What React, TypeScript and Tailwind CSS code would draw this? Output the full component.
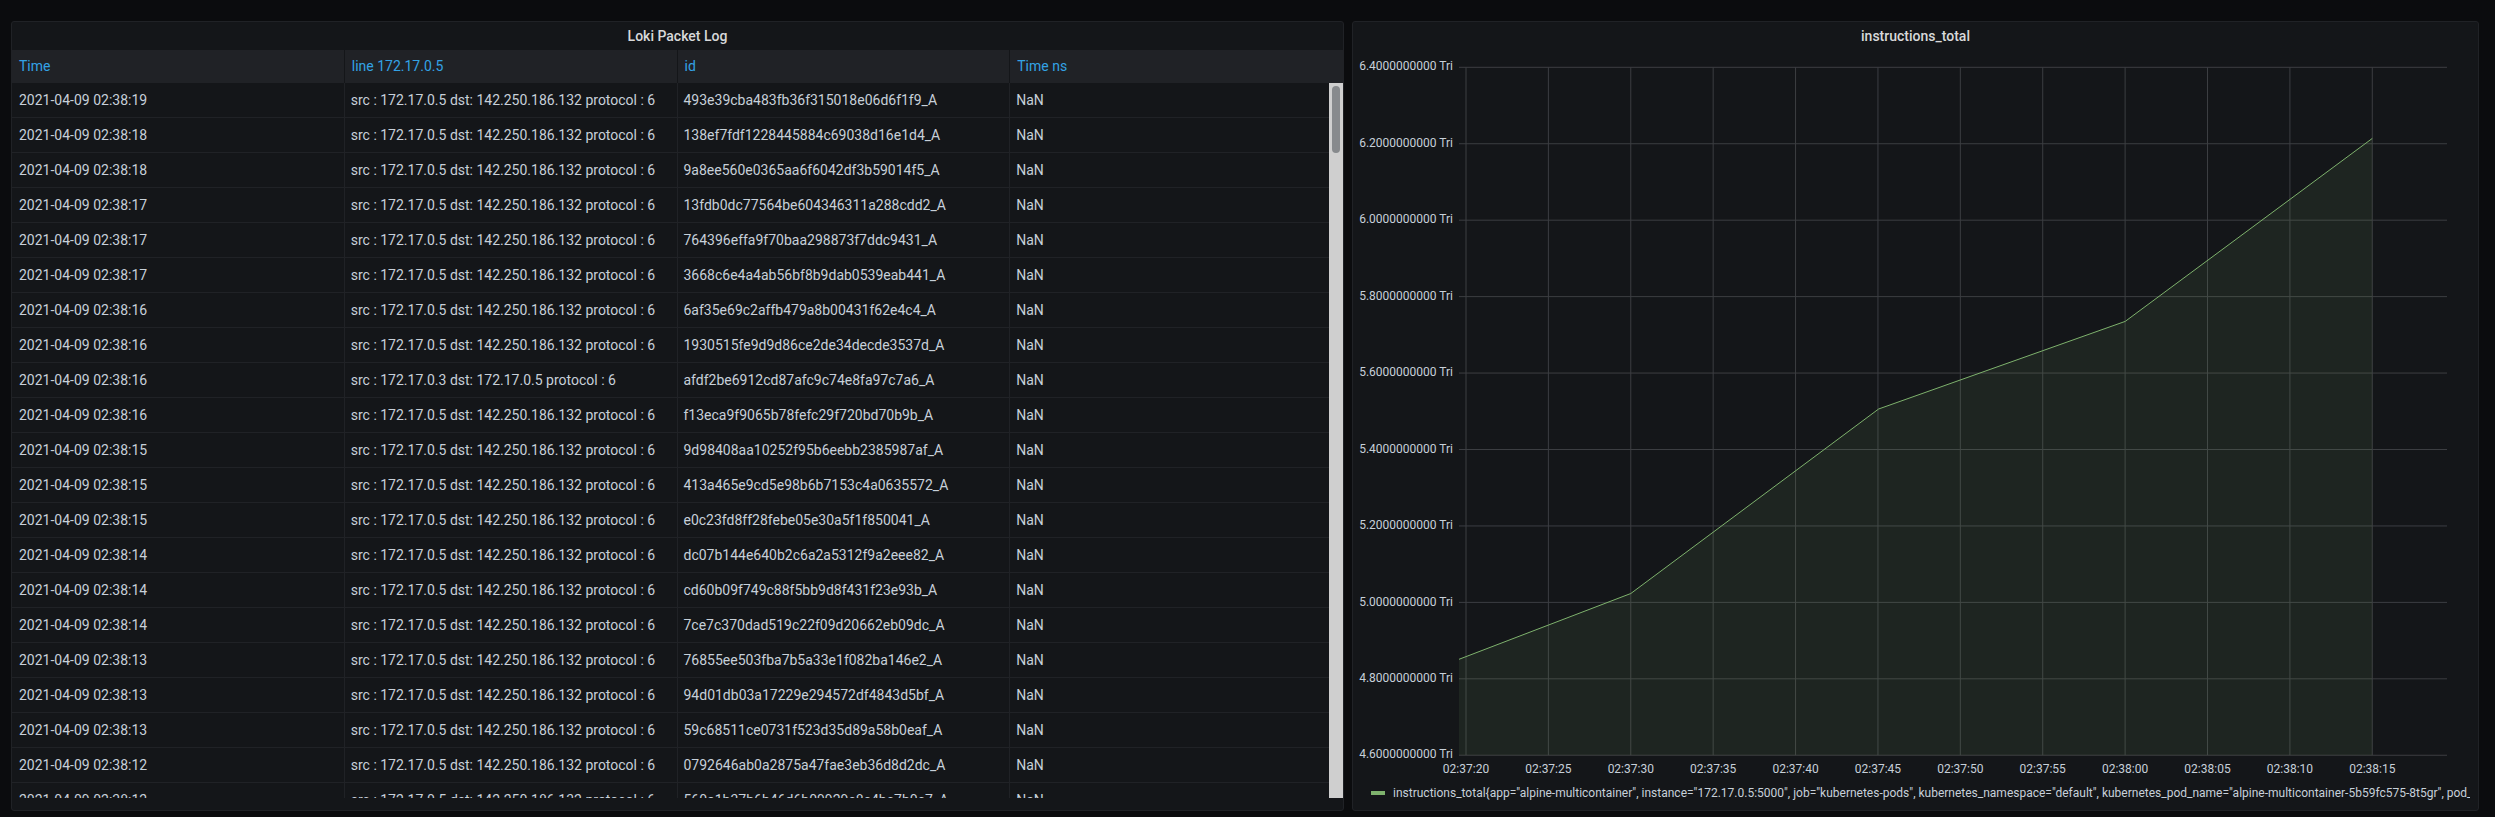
import React from "react";

const rows: [string, string, string][] = [
  ["2021-04-09 02:38:19", "src : 172.17.0.5 dst: 142.250.186.132 protocol : 6", "493e39cba483fb36f315018e06d6f1f9_A"],
  ["2021-04-09 02:38:18", "src : 172.17.0.5 dst: 142.250.186.132 protocol : 6", "138ef7fdf1228445884c69038d16e1d4_A"],
  ["2021-04-09 02:38:18", "src : 172.17.0.5 dst: 142.250.186.132 protocol : 6", "9a8ee560e0365aa6f6042df3b59014f5_A"],
  ["2021-04-09 02:38:17", "src : 172.17.0.5 dst: 142.250.186.132 protocol : 6", "13fdb0dc77564be604346311a288cdd2_A"],
  ["2021-04-09 02:38:17", "src : 172.17.0.5 dst: 142.250.186.132 protocol : 6", "764396effa9f70baa298873f7ddc9431_A"],
  ["2021-04-09 02:38:17", "src : 172.17.0.5 dst: 142.250.186.132 protocol : 6", "3668c6e4a4ab56bf8b9dab0539eab441_A"],
  ["2021-04-09 02:38:16", "src : 172.17.0.5 dst: 142.250.186.132 protocol : 6", "6af35e69c2affb479a8b00431f62e4c4_A"],
  ["2021-04-09 02:38:16", "src : 172.17.0.5 dst: 142.250.186.132 protocol : 6", "1930515fe9d9d86ce2de34decde3537d_A"],
  ["2021-04-09 02:38:16", "src : 172.17.0.3 dst: 172.17.0.5 protocol : 6", "afdf2be6912cd87afc9c74e8fa97c7a6_A"],
  ["2021-04-09 02:38:16", "src : 172.17.0.5 dst: 142.250.186.132 protocol : 6", "f13eca9f9065b78fefc29f720bd70b9b_A"],
  ["2021-04-09 02:38:15", "src : 172.17.0.5 dst: 142.250.186.132 protocol : 6", "9d98408aa10252f95b6eebb2385987af_A"],
  ["2021-04-09 02:38:15", "src : 172.17.0.5 dst: 142.250.186.132 protocol : 6", "413a465e9cd5e98b6b7153c4a0635572_A"],
  ["2021-04-09 02:38:15", "src : 172.17.0.5 dst: 142.250.186.132 protocol : 6", "e0c23fd8ff28febe05e30a5f1f850041_A"],
  ["2021-04-09 02:38:14", "src : 172.17.0.5 dst: 142.250.186.132 protocol : 6", "dc07b144e640b2c6a2a5312f9a2eee82_A"],
  ["2021-04-09 02:38:14", "src : 172.17.0.5 dst: 142.250.186.132 protocol : 6", "cd60b09f749c88f5bb9d8f431f23e93b_A"],
  ["2021-04-09 02:38:14", "src : 172.17.0.5 dst: 142.250.186.132 protocol : 6", "7ce7c370dad519c22f09d20662eb09dc_A"],
  ["2021-04-09 02:38:13", "src : 172.17.0.5 dst: 142.250.186.132 protocol : 6", "76855ee503fba7b5a33e1f082ba146e2_A"],
  ["2021-04-09 02:38:13", "src : 172.17.0.5 dst: 142.250.186.132 protocol : 6", "94d01db03a17229e294572df4843d5bf_A"],
  ["2021-04-09 02:38:13", "src : 172.17.0.5 dst: 142.250.186.132 protocol : 6", "59c68511ce0731f523d35d89a58b0eaf_A"],
  ["2021-04-09 02:38:12", "src : 172.17.0.5 dst: 142.250.186.132 protocol : 6", "0792646ab0a2875a47fae3eb36d8d2dc_A"],
  ["2021-04-09 02:38:12", "src : 172.17.0.5 dst: 142.250.186.132 protocol : 6", "560a1b37b6b46d6b09929c8c4bc7b0c7_A"],
];

const headers = ["Time", "line 172.17.0.5", "id", "Time ns"];

function LogTable() {
  return (
    <div className="flex flex-col w-[1333px] h-[790px] bg-[#141619] border border-[#202226] rounded-[3px] overflow-hidden">
      <div className="h-[28px] flex items-center justify-center text-[14px] font-medium text-[#d8d9da]">
        Loki Packet Log
      </div>
      <div className="grid grid-cols-4 h-[33px] bg-[#202226]">
        {headers.map((h, i) => (
          <div
            key={h}
            className={`flex items-center pl-[7px] text-[14px] text-[#33a2e5] ${i < 3 ? "border-r border-[#141619]" : ""}`}
          >
            {h}
          </div>
        ))}
      </div>
      <div className="relative h-[715px] overflow-hidden">
        {rows.map((r, idx) => (
          <div key={idx} className="grid grid-cols-4 h-[35px] border-b border-[#202226]">
            <div className="flex items-center pl-[7px] border-r border-[#202226] whitespace-nowrap">{r[0]}</div>
            <div className="flex items-center pl-[6px] border-r border-[#202226] whitespace-nowrap">{r[1]}</div>
            <div className="flex items-center pl-[6px] border-r border-[#202226] whitespace-nowrap">{r[2]}</div>
            <div className="flex items-center pl-[6px] whitespace-nowrap">NaN</div>
          </div>
        ))}
        <div className="absolute right-0 top-0 bottom-0 w-[14px] bg-[#cfcfcf]">
          <div className="absolute left-[3px] top-[3px] w-[8px] h-[67px] rounded-full bg-[#878a8d]" />
        </div>
      </div>
    </div>
  );
}

function Chart() {
  const yLabels = ["6.4000000000 Tri", "6.2000000000 Tri", "6.0000000000 Tri", "5.8000000000 Tri", "5.6000000000 Tri", "5.4000000000 Tri", "5.2000000000 Tri", "5.0000000000 Tri", "4.8000000000 Tri", "4.6000000000 Tri"];
  const xLabels = ["02:37:20", "02:37:25", "02:37:30", "02:37:35", "02:37:40", "02:37:45", "02:37:50", "02:37:55", "02:38:00", "02:38:05", "02:38:10", "02:38:15"];
  const top = 17.3;
  const yStep = 76.44;
  const bottom = top + yStep * 9;
  const left = 106;
  const right = 1094;
  const x0 = 113;
  const xStep = 82.39;
  const pts: [number, number][] = [
    [106, 609.3],
    [277.8, 543.5],
    [525.6, 359],
    [772.2, 271.4],
    [1019.3, 88.4],
  ];
  const line = pts.map((p) => p.join(",")).join(" ");
  const area = `${pts[0][0]},${bottom} ${line} ${pts[pts.length - 1][0]},${bottom}`;
  return (
    <svg width={1125} height={730} className="block" fontFamily="Roboto, sans-serif">
      {yLabels.map((_, i) => (
        <line key={"h" + i} x1={left} x2={right} y1={top + i * yStep} y2={top + i * yStep} stroke="#3c3e42" strokeWidth={1} />
      ))}
      {xLabels.map((_, k) => (
        <line key={"v" + k} x1={x0 + k * xStep} x2={x0 + k * xStep} y1={top} y2={bottom} stroke="#3c3e42" strokeWidth={1} />
      ))}
      <polygon points={area} fill="#7eb26d" fillOpacity={0.1} />
      <polyline points={line} fill="none" stroke="#7eb26d" strokeWidth={1} />
      {yLabels.map((t, i) => (
        <text key={"yl" + i} x={100} y={top + i * yStep} textAnchor="end" dominantBaseline="middle" fontSize={12} fill="#c7d0d9">
          {t}
        </text>
      ))}
      {xLabels.map((t, k) => (
        <text key={"xl" + k} x={x0 + k * xStep} y={720} textAnchor="middle" dominantBaseline="middle" fontSize={12} fill="#c7d0d9">
          {t}
        </text>
      ))}
    </svg>
  );
}

function GraphPanel() {
  return (
    <div className="flex flex-col w-[1127px] h-[790px] bg-[#141619] border border-[#202226] rounded-[3px] overflow-hidden">
      <div className="h-[28px] flex items-center justify-center text-[14px] font-medium text-[#d8d9da]">
        instructions_total
      </div>
      <Chart />
      <div className="h-[26px] flex items-center pl-[18px] pr-[8px] overflow-hidden">
        <div className="w-[14px] h-[4px] bg-[#7eb26d] shrink-0" />
        <div className="ml-[8px] text-[12px] text-[#c7d0d9] whitespace-nowrap overflow-hidden">
          instructions_total{"{"}app="alpine-multicontainer", instance="172.17.0.5:5000", job="kubernetes-pods", kubernetes_namespace="default", kubernetes_pod_name="alpine-multicontainer-5b59fc575-8t5gr", pod_template_hash="5b59fc575"{"}"}
        </div>
      </div>
    </div>
  );
}

export default function App() {
  return (
    <div className="w-[2495px] h-[817px] bg-[#0b0c0e] font-['Roboto',sans-serif] text-[14px] text-[#c7d0d9] flex items-start gap-[8px] pl-[11px] pt-[21px] overflow-hidden">
      <LogTable />
      <GraphPanel />
    </div>
  );
}
